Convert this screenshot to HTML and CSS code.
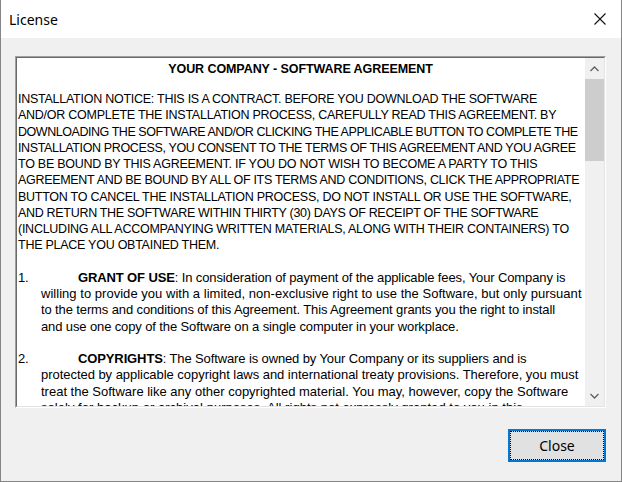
FILE: index.html
```html
<!DOCTYPE html>
<html>
<head>
<meta charset="utf-8">
<title>License</title>
<link rel="stylesheet" href="styles.css">
</head>
<body>
<div class="window">
  <div class="titlebar">
    <span class="title">License</span>
    <svg class="close-x" width="12" height="12" viewBox="0 0 12 12"><path d="M0.5 0.5 L11.5 11.5 M11.5 0.5 L0.5 11.5" stroke="#111" stroke-width="1.1" fill="none"/></svg>
  </div>
  <div class="content">
    <div class="textbox">
      <div class="textbox-inner">
        <div class="doc">
          <div class="doc-title">YOUR COMPANY - SOFTWARE AGREEMENT</div>
          <div class="para caps">
            <div class="ln">INSTALLATION NOTICE: THIS IS A CONTRACT. BEFORE YOU DOWNLOAD THE SOFTWARE</div>
            <div class="ln">AND/OR COMPLETE THE INSTALLATION PROCESS, CAREFULLY READ THIS AGREEMENT. BY</div>
            <div class="ln tight-3">DOWNLOADING THE SOFTWARE AND/OR CLICKING THE APPLICABLE BUTTON TO COMPLETE THE</div>
            <div class="ln tight-2">INSTALLATION PROCESS, YOU CONSENT TO THE TERMS OF THIS AGREEMENT AND YOU AGREE</div>
            <div class="ln">TO BE BOUND BY THIS AGREEMENT. IF YOU DO NOT WISH TO BECOME A PARTY TO THIS</div>
            <div class="ln tight-1">AGREEMENT AND BE BOUND BY ALL OF ITS TERMS AND CONDITIONS, CLICK THE APPROPRIATE</div>
            <div class="ln">BUTTON TO CANCEL THE INSTALLATION PROCESS, DO NOT INSTALL OR USE THE SOFTWARE,</div>
            <div class="ln tight-1">AND RETURN THE SOFTWARE WITHIN THIRTY (30) DAYS OF RECEIPT OF THE SOFTWARE</div>
            <div class="ln">(INCLUDING ALL ACCOMPANYING WRITTEN MATERIALS, ALONG WITH THEIR CONTAINERS) TO</div>
            <div class="ln">THE PLACE YOU OBTAINED THEM.</div>
          </div>
          <div class="para numbered">
            <div class="ln first"><span class="num">1.</span><b>GRANT OF USE</b>: In consideration of payment of the applicable fees, Your Company is</div>
            <div class="ln">willing to provide you with a limited, non-exclusive right to use the Software, but only pursuant</div>
            <div class="ln narrow-2">to the terms and conditions of this Agreement. This Agreement grants you the right to install</div>
            <div class="ln narrow-2">and use one copy of the Software on a single computer in your workplace.</div>
          </div>
          <div class="para numbered">
            <div class="ln first"><span class="num">2.</span><b>COPYRIGHTS</b>: The Software is owned by Your Company or its suppliers and is</div>
            <div class="ln narrow-1">protected by applicable copyright laws and international treaty provisions. Therefore, you must</div>
            <div class="ln narrow-0">treat the Software like any other copyrighted material. You may, however, copy the Software</div>
            <div class="ln">solely for backup or archival purposes. All rights not expressly granted to you in this</div>
          </div>
        </div>
        <div class="scrollbar">
          <div class="sb-btn">
            <svg width="9" height="6" viewBox="0 0 9 6"><path d="M0.5 5 L4.5 1 L8.5 5" stroke="#606060" stroke-width="1.3" fill="none"/></svg>
          </div>
          <div class="sb-track"><div class="sb-thumb"></div></div>
          <div class="sb-btn">
            <svg width="9" height="6" viewBox="0 0 9 6"><path d="M0.5 1 L4.5 5 L8.5 1" stroke="#606060" stroke-width="1.3" fill="none"/></svg>
          </div>
        </div>
      </div>
    </div>
    <div class="footer">
      <button class="btn" type="button">Close</button>
    </div>
  </div>
</div>
</body>
</html>
```

FILE: styles.css
```css
html, body {
  margin: 0;
  padding: 0;
}
body {
  width: 622px;
  height: 482px;
  overflow: hidden;
  background: #f0f0f0;
}
.window {
  box-sizing: border-box;
  width: 622px;
  height: 482px;
  border-left: 1px solid #868686;
  border-right: 1px solid #868686;
  border-bottom: 1px solid #868686;
  display: flex;
  flex-direction: column;
  font-family: "Noto Sans", "Open Sans", sans-serif;
}
.titlebar {
  height: 38px;
  background: #ffffff;
  display: flex;
  align-items: center;
  justify-content: space-between;
  padding: 0 15px 0 8px;
  flex: none;
}
.title {
  font-size: 14px;
  color: #000;
}
.close-x {
  display: block;
  margin-top: -1px;
}
.content {
  flex: 1;
  background: #f0f0f0;
  padding: 18px 15px 0 14px;
}
.textbox {
  height: 352px;
  box-sizing: border-box;
  border: 1px solid;
  border-color: #a0a0a0 #ffffff #ffffff #a0a0a0;
}
.textbox-inner {
  height: 100%;
  box-sizing: border-box;
  border: 1px solid;
  border-color: #696969 #e3e3e3 #e3e3e3 #696969;
  background: #ffffff;
  display: flex;
}
.doc {
  flex: 1;
  overflow: hidden;
  padding: 3px 0 0 1px;
  font-family: "Liberation Sans", Arial, sans-serif;
  font-size: 12.5px;
  line-height: 16.25px;
  color: #000;
  white-space: nowrap;
}
.doc-title {
  font-weight: bold;
  text-align: center;
  height: 16px;
  line-height: 16px;
  margin-bottom: 14px;
  padding-right: 2px;
  letter-spacing: -0.08px;
}
.para {
  margin-bottom: 16.25px;
}
.caps {
  letter-spacing: -0.26px;
}
.caps .tight-1 {
  letter-spacing: -0.31px;
}
.caps .tight-2 {
  letter-spacing: -0.36px;
}
.caps .tight-3 {
  letter-spacing: -0.45px;
}
.numbered {
  font-size: 13px;
  letter-spacing: 0.03px;
}
.numbered .ln {
  padding-left: 23px;
}
.numbered .ln.first {
  padding-left: 0;
  letter-spacing: -0.12px;
}
.numbered .narrow-0 {
  letter-spacing: 0;
}
.numbered .narrow-1 {
  letter-spacing: -0.04px;
}
.numbered .narrow-2 {
  letter-spacing: -0.12px;
}
.num {
  display: inline-block;
  width: 60px;
}
.scrollbar {
  width: 19px;
  flex: none;
  background: #f0f0f0;
  display: flex;
  flex-direction: column;
}
.sb-btn {
  height: 21px;
  display: flex;
  align-items: center;
  justify-content: center;
  flex: none;
}
.sb-track {
  flex: 1;
}
.sb-thumb {
  height: 82px;
  background: #cdcdcd;
}
.footer {
  display: flex;
  justify-content: flex-end;
  padding-top: 21px;
}
.btn {
  width: 98px;
  height: 33px;
  box-sizing: border-box;
  border: 2px solid #0078d7;
  background: #e1e1e1;
  outline: 1px dotted #000;
  outline-offset: -3px;
  font-family: "Noto Sans", "Open Sans", sans-serif;
  font-size: 14px;
  color: #000;
  padding: 0;
  margin: 0;
}
```
